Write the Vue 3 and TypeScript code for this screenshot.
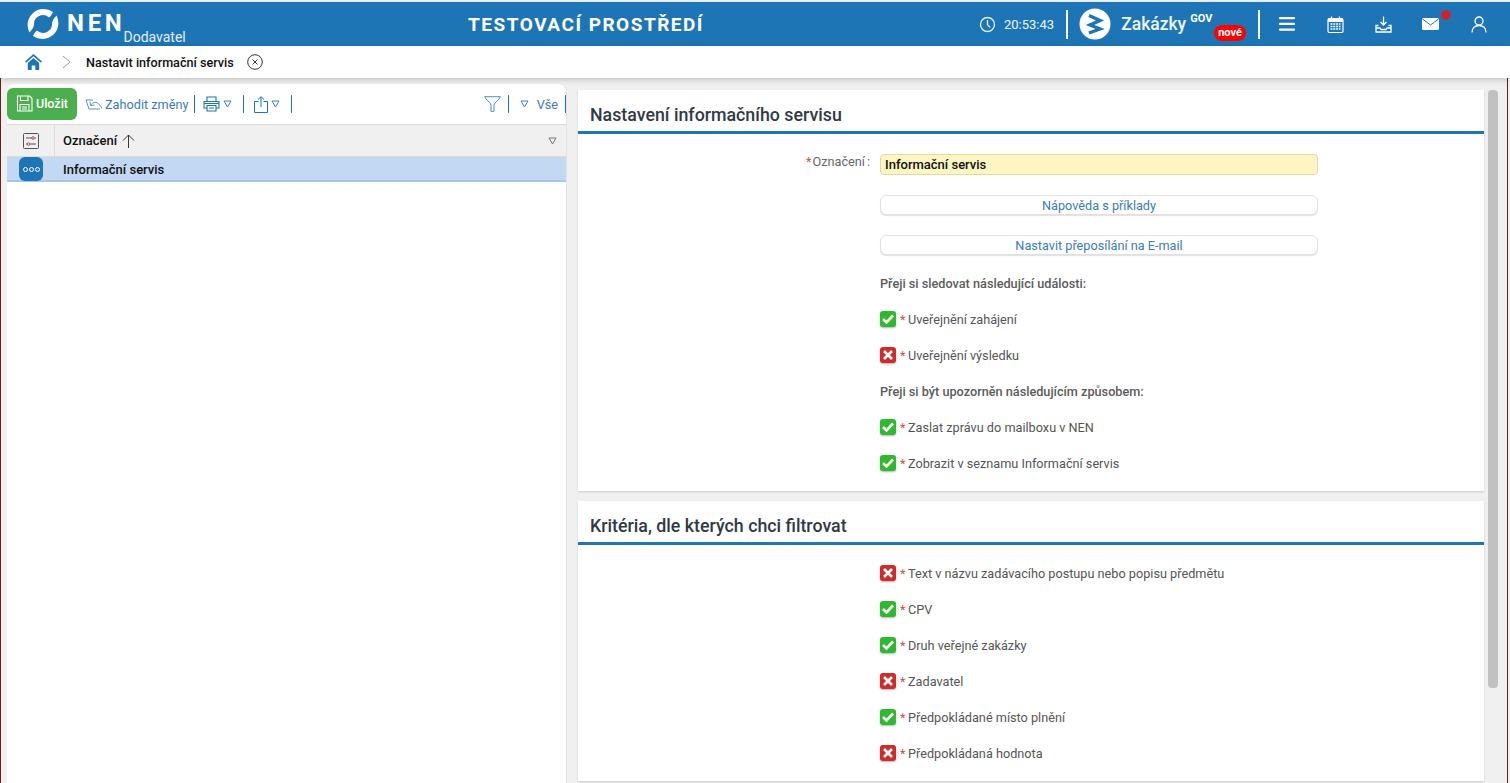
<script setup lang="ts">
interface Item {
  label: string
  on: boolean
}

const events: Item[] = [
  { label: 'Uveřejnění zahájení', on: true },
  { label: 'Uveřejnění výsledku', on: false },
]
const ways: Item[] = [
  { label: 'Zaslat zprávu do mailboxu v NEN', on: true },
  { label: 'Zobrazit v seznamu Informační servis', on: true },
]
const criteria: Item[] = [
  { label: 'Text v názvu zadávacího postupu nebo popisu předmětu', on: false },
  { label: 'CPV', on: true },
  { label: 'Druh veřejné zakázky', on: true },
  { label: 'Zadavatel', on: false },
  { label: 'Předpokládané místo plnění', on: true },
  { label: 'Předpokládaná hodnota', on: false },
]
</script>

<template>
  <div class="page">
    <header class="topbar">
      <div class="brand">
        <svg class="logo" width="34" height="34" viewBox="0 0 34 34" fill="#fff">
          <path d="M27 5A16 16 0 0 0 3.500 25.500C5.500 23 7.500 21 8 18A9 9 0 0 1 23 10.500C25 9 26 7 27 5Z" />
          <path d="M27 5A16 16 0 0 0 3.500 25.500C5.500 23 7.500 21 8 18A9 9 0 0 1 23 10.500C25 9 26 7 27 5Z" transform="rotate(180 17 17)" />
        </svg>
        <span class="nen">NEN</span>
        <span class="role">Dodavatel</span>
      </div>
      <div class="env">TESTOVACÍ PROSTŘEDÍ</div>
      <div class="tools">
        <svg class="clock" width="17" height="17" viewBox="0 0 17 17" fill="none" stroke="#e8f1f8" stroke-width="1.300">
          <circle cx="8.500" cy="8.500" r="7" />
          <path d="M8.500 4v4.800l2.600 2.600" />
        </svg>
        <span class="time">20:53:43</span>
        <span class="vline"></span>
        <svg class="zlogo" width="32" height="32" viewBox="0 0 32 32">
          <circle cx="16" cy="16" r="15.500" fill="#fff" />
          <path d="M10 7.500 21 12.500 11 17 21 21 10 25" fill="none" stroke="#1d75b5" stroke-width="3.400" />
        </svg>
        <span class="zak">Zakázky</span>
        <span class="gov">GOV</span>
        <span class="nove">nové</span>
        <span class="vline second"></span>
        <svg class="ic burger" width="16" height="14" viewBox="0 0 16 14" fill="#fff">
          <rect width="16" height="2.200" rx="1" />
          <rect y="5.800" width="16" height="2.200" rx="1" />
          <rect y="11.600" width="16" height="2.200" rx="1" />
        </svg>
        <svg class="ic cal" width="17" height="17" viewBox="0 0 17 17">
          <rect x="1" y="2.500" width="15" height="14" rx="1.500" fill="none" stroke="#fff" stroke-width="1.200" />
          <rect x="1" y="2.500" width="15" height="3.500" fill="#fff" />
          <path d="M4.500 0.500v3M12.500 0.500v3" stroke="#fff" stroke-width="1.200" />
          <path d="M3.500 8h10M3.500 10.500h10M3.500 13h10" stroke="#fff" stroke-width="1.400" stroke-dasharray="2 .8" />
        </svg>
        <svg class="ic dl" width="17" height="17" viewBox="0 0 17 17" fill="none" stroke="#fff" stroke-width="1.300">
          <path d="M8.500 .5v8M5.500 6l3 3 3-3" />
          <path d="M3.500 9.500H1v6.500h15V9.500h-2.500M1 12h4l1 1.500h5l1-1.500h4" />
        </svg>
        <span class="mail">
          <svg width="17" height="12" viewBox="0 0 17 12">
            <rect width="17" height="12" rx="1.500" fill="#fff" />
            <path d="M.5 1 8.500 7l8-6" fill="none" stroke="#1d75b5" stroke-width="1" />
          </svg>
          <span class="dot"></span>
        </span>
        <svg class="ic user" width="16" height="17" viewBox="0 0 16 17" fill="none" stroke="#fff" stroke-width="1.300">
          <circle cx="8" cy="5" r="4" />
          <path d="M1 16.500c0-4.500 3-7 7-7s7 2.500 7 7" />
        </svg>
      </div>
    </header>

    <nav class="crumbs">
      <svg class="home" width="17" height="16" viewBox="0 0 17 16" fill="#1d75b5">
        <path d="M8.500 0 0 7.500l1 1.200L8.500 2.200 16 8.700l1-1.200z" />
        <path d="M2.800 9 8.500 4l5.700 5v7h-3.900v-4.500H6.700V16H2.800z" />
      </svg>
      <svg class="chev" width="9" height="14" viewBox="0 0 9 14" fill="none" stroke="#9a9a9a" stroke-width="1">
        <path d="M1 1l7 6-7 6" />
      </svg>
      <span class="crumb">Nastavit informační servis</span>
      <svg class="closer" width="16" height="16" viewBox="0 0 16 16" fill="none" stroke="#333" stroke-width="1">
        <circle cx="8" cy="8" r="7.300" />
        <path d="M5.500 5.500l5 5M10.500 5.500l-5 5" />
      </svg>
    </nav>

    <main class="content">
      <section class="left">
        <div class="toolbar">
          <button class="save">
            <svg width="17" height="17" viewBox="0 0 17 17" fill="none" stroke="#fff" stroke-width="1.100">
              <path d="M1.500 1h12l2.500 2.500V16H1.500z" />
              <path d="M4.500 1v4.500h7.500V1M4 16v-6.500h9V16M6 12h5M6 14h5" />
            </svg>
            Uložit
          </button>
          <svg class="undo" width="18" height="12" viewBox="0 0 18 12" fill="none" stroke="#5b93c4" stroke-width="1">
            <path d="M8 2H1l3 9h11" />
            <path d="M5.500 7.500C8 3 13 2.500 17 10.500M5 3.500l.5 4 4-.5" />
          </svg>
          <span class="link">Zahodit změny</span>
          <span class="sep"></span>
          <svg class="print" width="17" height="16" viewBox="0 0 17 16" fill="none" stroke="#1d75b5" stroke-width="1.100">
            <path d="M4 5V1h9v4M4 12H1V5.500h15V12h-3M4 9.500h9V15H4zM1 7.500h15M6 12h5" />
          </svg>
          <svg class="tri" width="9" height="8" viewBox="0 0 9 8" fill="none" stroke="#3b82bd"><path d="M1 1h7L4.500 7z" /></svg>
          <span class="sep pad"></span>
          <svg class="share" width="14" height="17" viewBox="0 0 14 17" fill="none" stroke="#1d75b5" stroke-width="1">
            <path d="M4.500 5.500H.5v11h13v-11h-4M7 11V1M4 3.500 7 .7l3 2.800" />
          </svg>
          <svg class="tri" width="9" height="8" viewBox="0 0 9 8" fill="none" stroke="#3b82bd"><path d="M1 1h7L4.500 7z" /></svg>
          <span class="sep pad"></span>
          <span class="grow"></span>
          <svg class="funnel" width="17" height="16" viewBox="0 0 17 16" fill="none" stroke="#4a90c9" stroke-width="1">
            <path d="M.7.700h15.600C15.500 4 10.500 6 10 9V15.300H7V9C6.500 6 1.500 4 .7.700z" />
          </svg>
          <span class="sep short"></span>
          <svg class="tri all" width="9" height="8" viewBox="0 0 9 8" fill="none" stroke="#3b82bd"><path d="M1 1h7L4.500 7z" /></svg>
          <span class="link vse">Vše</span>
          <span class="sep end"></span>
        </div>
        <div class="thead">
          <div class="cfg">
            <svg width="16" height="16" viewBox="0 0 16 16" fill="none" stroke="#555" stroke-width="1">
              <rect x=".5" y=".5" width="15" height="15" rx="1" />
              <path d="M3 5h6M11.500 5H13M3 11h1.500M7 11h6" />
              <circle cx="10" cy="5" r="1.300" stroke="#a5554f" />
              <circle cx="5.500" cy="11" r="1.300" stroke="#a5554f" />
            </svg>
          </div>
          <div class="colname">
            Označení
            <svg width="13" height="14" viewBox="0 0 13 14" fill="none" stroke="#333" stroke-width="1">
              <path d="M6.500 14V1M1 6.500 6.500 1 12 6.500" />
            </svg>
            <span class="grow"></span>
            <svg class="tri" width="9" height="8" viewBox="0 0 9 8" fill="none" stroke="#777"><path d="M1 1h7L4.500 7z" /></svg>
          </div>
        </div>
        <div class="trow">
          <div class="badge"><i></i><i></i><i></i></div>
          <span>Informační servis</span>
        </div>
      </section>

      <div class="right">
        <section class="card first">
          <h2>Nastavení informačního servisu</h2>
          <div class="form">
            <div class="namefield">
              <label><em>*</em>Označení<b>:</b></label>
              <input class="inp" value="Informační servis" readonly />
            </div>
            <button class="wide">Nápověda s příklady</button>
            <button class="wide">Nastavit přeposílání na E-mail</button>
            <p class="lead">Přeji si sledovat následující události:</p>
            <div v-for="item in events" :key="item.label" class="check">
              <span class="box" :class="item.on ? 'yes' : 'no'">
                <svg v-if="item.on" width="12" height="10" viewBox="0 0 12 10" fill="none" stroke="#fff" stroke-width="2.600"><path d="M1 5l3.500 3.500L11 1.500" /></svg>
                <svg v-else width="10" height="10" viewBox="0 0 10 10" fill="none" stroke="#fff" stroke-width="2.600"><path d="M1 1l8 8M9 1l-8 8" /></svg>
              </span>
              <em>*</em>{{ item.label }}
            </div>
            <p class="lead">Přeji si být upozorněn následujícím způsobem:</p>
            <div v-for="item in ways" :key="item.label" class="check">
              <span class="box" :class="item.on ? 'yes' : 'no'">
                <svg v-if="item.on" width="12" height="10" viewBox="0 0 12 10" fill="none" stroke="#fff" stroke-width="2.600"><path d="M1 5l3.500 3.500L11 1.500" /></svg>
                <svg v-else width="10" height="10" viewBox="0 0 10 10" fill="none" stroke="#fff" stroke-width="2.600"><path d="M1 1l8 8M9 1l-8 8" /></svg>
              </span>
              <em>*</em>{{ item.label }}
            </div>
          </div>
        </section>

        <section class="card second">
          <h2>Kritéria, dle kterých chci filtrovat</h2>
          <div class="form crit">
            <div v-for="item in criteria" :key="item.label" class="check">
              <span class="box" :class="item.on ? 'yes' : 'no'">
                <svg v-if="item.on" width="12" height="10" viewBox="0 0 12 10" fill="none" stroke="#fff" stroke-width="2.600"><path d="M1 5l3.500 3.500L11 1.500" /></svg>
                <svg v-else width="10" height="10" viewBox="0 0 10 10" fill="none" stroke="#fff" stroke-width="2.600"><path d="M1 1l8 8M9 1l-8 8" /></svg>
              </span>
              <em>*</em>{{ item.label }}
            </div>
          </div>
        </section>
      </div>

      <div class="scrollbar"><div class="thumb"></div></div>
    </main>
  </div>
</template>

<style>
html, body {
  margin: 0;
  height: 100%;
  overflow: hidden;
}
</style>

<style scoped>
.page {
  height: 783px;
  box-sizing: border-box;
  padding-top: 2px;
  display: flex;
  flex-direction: column;
  background: #e9eef2;
  font-family: Roboto, "Liberation Sans", sans-serif;
  font-size: 13px;
  overflow: hidden;
}

/* horni lista */
.topbar {
  height: 44px;
  flex: none;
  background: #1d75b5;
  color: #fff;
  display: flex;
  align-items: center;
}
.brand {
  display: flex;
  align-items: center;
  padding-left: 26px;
  width: 440px;
  height: 44px;
  flex: none;
}
.nen {
  font-size: 24px;
  font-weight: 700;
  letter-spacing: 3.700px;
  margin-left: 7px;
  margin-top: -2px;
}
.role {
  font-size: 14px;
  align-self: flex-end;
  margin-left: -2px;
  line-height: 17px;
  color: #e4eff7;
}
.env {
  width: 240px;
  flex: none;
  text-align: center;
  font-size: 19px;
  font-weight: 700;
  letter-spacing: 1.500px;
  white-space: nowrap;
}
.tools {
  padding-left: 273px;
  display: flex;
  align-items: center;
  height: 44px;
  flex: 1;
  position: relative;
}
.time {
  margin-left: 8px;
  font-size: 13px;
  color: #eef5fa;
}
.vline {
  width: 2px;
  height: 29px;
  background: #fff;
  margin-left: 12px;
}
.vline.second {
  margin-left: 45px;
}
.zlogo {
  margin-left: 11px;
}
.zak {
  margin-left: 10px;
  font-size: 17.500px;
  font-weight: 500;
  color: #eef5fa;
}
.gov {
  font-size: 11px;
  font-weight: 700;
  margin-left: 4px;
  margin-top: -12px;
  width: 23px;
}
.nove {
  position: absolute;
  left: 508px;
  top: 23px;
  width: 32px;
  height: 16px;
  border-radius: 8px;
  background: #f00;
  font-size: 11px;
  font-weight: 700;
  line-height: 16px;
  text-align: center;
}
.ic.burger {
  margin-left: 19px;
}
.ic.cal {
  margin-left: 32px;
}
.ic.dl {
  margin-left: 31px;
}
.mail {
  margin-left: 30px;
  position: relative;
  display: flex;
}
.dot {
  position: absolute;
  right: -12px;
  top: -8px;
  width: 10px;
  height: 10px;
  border-radius: 50%;
  background: #c9262c;
}
.ic.user {
  margin-left: 32px;
}

/* drobinka */
.crumbs {
  height: 32px;
  flex: none;
  background: #fff;
  display: flex;
  align-items: center;
  padding-left: 25px;
  box-shadow: 0 2px 6px rgba(0, 0, 0, .18);
  position: relative;
  z-index: 2;
}
.chev {
  margin-left: 20px;
}
.crumb {
  margin-left: 15px;
  font-size: 12.600px;
  font-weight: 500;
  color: #111;
}
.closer {
  margin-left: 13px;
}

/* obsah */
.content {
  flex: 1;
  display: flex;
  align-items: flex-start;
  background: #f0f0f0;
  border-left: 1px solid #6f1d1b;
  border-right: 2px solid #f0f0f0;
  position: relative;
  padding: 6px 0 0 6px;
  min-height: 0;
}
.content::after {
  content: "";
  position: absolute;
  right: 0;
  top: 0;
  bottom: 0;
  width: 1px;
  background: #6f1d1b;
}
.left {
  width: 559px;
  height: 705px;
  flex: none;
  background: #fff;
  border-radius: 8px 8px 0 0;
  border-right: 1px solid #e2e2e2;
}
.toolbar {
  height: 40px;
  display: flex;
  align-items: center;
}
.save {
  width: 70px;
  height: 32px;
  border: 0;
  border-radius: 6px;
  background: #4cae4f;
  color: #fff;
  font: 500 12.500px Roboto, "Liberation Sans", sans-serif;
  display: flex;
  align-items: center;
  gap: 3px;
  padding: 0 0 0 9px;
  margin-top: -1px;
}
.undo {
  margin-left: 8px;
}
.link {
  color: #3b7cb4;
  font-size: 12.700px;
  margin-left: 2px;
}
.sep {
  width: 1px;
  height: 18px;
  background: #1d75b5;
  margin-left: 6px;
}
.sep.pad {
  margin-left: 11px;
}
.print {
  margin-left: 8px;
}
.tri {
  margin-left: 3px;
  flex: none;
}
.share {
  margin-left: 10px;
}
.grow {
  flex: 1;
}
.sep.short {
  margin-left: 7px;
}
.tri.all {
  margin-left: 11px;
}
.vse {
  margin-left: 8px;
}
.sep.end {
  margin-left: 7px;
}
.thead {
  height: 33px;
  display: flex;
  background: #f0f0f0;
  border-top: 1px solid #dcdcdc;
  border-bottom: 1px solid #dcdcdc;
  box-sizing: border-box;
}
.cfg {
  width: 47px;
  border-right: 1px solid #dcdcdc;
  display: flex;
  align-items: center;
  justify-content: center;
  flex: none;
}
.colname {
  flex: 1;
  display: flex;
  align-items: center;
  gap: 5px;
  padding: 0 9px 0 8px;
  font-size: 13px;
  font-weight: 500;
  color: #111;
}
.trow {
  height: 25px;
  display: flex;
  align-items: center;
  background: #c2d8f3;
  border-bottom: 2px solid #a4c6ea;
  box-sizing: border-box;
  font-size: 13px;
  font-weight: 500;
  color: #111;
}
.trow span {
  margin-left: 20px;
  margin-top: 2px;
}
.badge {
  width: 24px;
  height: 24px;
  margin-left: 12px;
  border-radius: 6px;
  background: #1d75b5;
  display: flex;
  align-items: center;
  justify-content: center;
  gap: 1px;
  margin-top: 1px;
}
.badge i {
  width: 5px;
  height: 5px;
  box-sizing: border-box;
  border: 1px solid #fff;
  border-radius: 50%;
}
.right {
  width: 906px;
  margin-left: 11px;
  margin-top: 6px;
  flex: none;
  display: flex;
  flex-direction: column;
  gap: 10px;
}
.card {
  background: #fff;
  box-shadow: 0 1px 2px rgba(0, 0, 0, .15);
}
.card.first {
  height: 401px;
}
.card.second {
  height: 280px;
}
h2 {
  margin: 0;
  height: 44px;
  box-sizing: border-box;
  padding: 13px 0 0 12px;
  border-bottom: 3px solid #1d75b5;
  font-size: 17.800px;
  font-weight: 500;
  line-height: 24px;
  color: #2f3a45;
}
.form {
  padding: 20px 0 0 302px;
  font-size: 12.700px;
  color: #555;
}
.form.crit {
  padding-top: 20px;
}
.namefield {
  display: flex;
  align-items: center;
  position: relative;
  height: 21px;
  margin-bottom: 20px;
}
.namefield label {
  position: absolute;
  right: 100%;
  margin-right: 10px;
  white-space: nowrap;
  top: 0;
  font-size: 12.700px;
  color: #666;
}
.namefield label em {
  margin-right: 1px;
}
.namefield label b {
  font-weight: 400;
  margin-left: 2px;
}
em {
  font-style: normal;
  color: #c9504c;
  margin-right: 2.500px;
}
.inp {
  width: 438px;
  height: 21px;
  box-sizing: border-box;
  border: 1px solid #e2d9a8;
  border-radius: 4px;
  background: #fdf6c3;
  padding: 0 4px;
  font: 500 13px Roboto, "Liberation Sans", sans-serif;
  color: #111;
  outline: none;
}
.wide {
  display: block;
  width: 438px;
  height: 20px;
  border: 1px solid #e0e0e0;
  border-radius: 6px;
  background: #fff;
  box-shadow: 0 1px 1px rgba(0, 0, 0, .12);
  color: #3b7cb4;
  font: 400 12.700px Roboto, "Liberation Sans", sans-serif;
  padding: 0;
  margin-bottom: 20px;
}
.lead {
  margin: 0;
  height: 36px;
  line-height: 17px;
  font-weight: 500;
  color: #5b5b5b;
}
.check {
  height: 36px;
  display: flex;
  align-items: flex-start;
  line-height: 17px;
  white-space: pre;
}
.check em {
  margin-left: 4px;
}
.box {
  width: 16px;
  height: 16px;
  border-radius: 3px;
  display: flex;
  align-items: center;
  justify-content: center;
  box-shadow: 0 1px 2px rgba(0, 0, 0, .3);
}
.box.yes {
  background: #2fb92f;
}
.box.no {
  background: #d02b2b;
}
.scrollbar {
  position: absolute;
  right: 10px;
  top: 12px;
  width: 10px;
}
.thumb {
  height: 598px;
  background: #c1c1c1;
  border-radius: 4px;
}
</style>
